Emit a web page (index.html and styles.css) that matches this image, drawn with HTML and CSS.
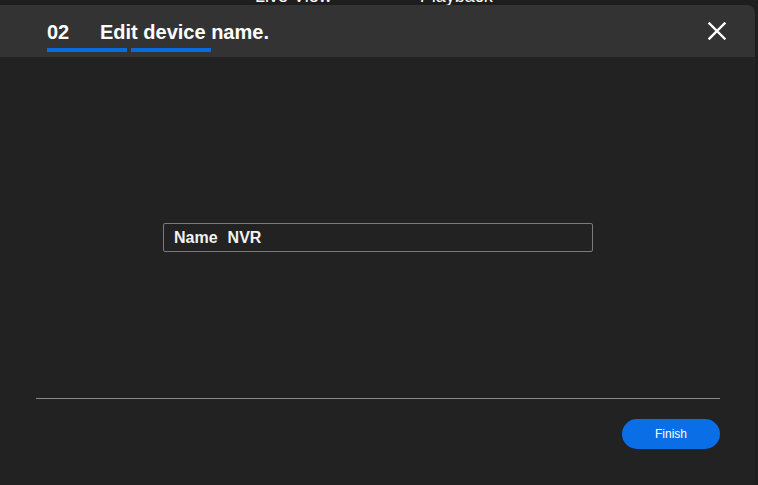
FILE: index.html
```html
<!DOCTYPE html>
<html>
<head>
<meta charset="utf-8">
<link rel="stylesheet" href="styles.css">
</head>
<body>
<div class="topnav">
  <span class="nav-item live">Live View</span>
  <span class="nav-item">Playback</span>
</div>
<div class="modal">
  <div class="modal-header">
    <div class="steps">
      <div class="step step-num">02</div>
      <div class="step step-title">Edit device name.</div>
    </div>
    <button class="close" aria-label="Close">
      <svg width="18" height="18" viewBox="0 0 18 18"><path d="M1.5 1.5 L16.5 16.5 M16.5 1.5 L1.5 16.5" stroke="#fff" stroke-width="2.4" stroke-linecap="square"/></svg>
    </button>
  </div>
  <div class="modal-body">
    <div class="field">
      <span class="label">Name</span>
      <span class="value">NVR</span>
    </div>
  </div>
  <div class="modal-footer">
    <button class="finish">Finish</button>
  </div>
</div>
</body>
</html>
```
FILE: styles.css
```css
html, body {
  margin: 0;
  padding: 0;
}
body {
  width: 758px;
  height: 485px;
  overflow: hidden;
  background: #1e1e1e;
  font-family: "Liberation Sans", Arial, sans-serif;
  position: relative;
}
.topnav {
  height: 5px;
  display: flex;
  padding-left: 255px;
  gap: 88px;
}
.nav-item {
  color: #fff;
  font-size: 18px;
  line-height: 18px;
  margin-top: -13px;
}
.modal {
  position: absolute;
  left: -4px;
  top: 5px;
  width: 759px;
  height: 484px;
  background: #222222;
  border-radius: 0 8px 8px 0;
  overflow: hidden;
  display: flex;
  flex-direction: column;
}
.modal-header {
  height: 52px;
  background: #333333;
  display: flex;
  align-items: flex-start;
  justify-content: space-between;
  padding-left: 51px;
  padding-right: 29px;
}
.steps {
  display: flex;
  gap: 4px;
}
.step {
  width: 80px;
  height: 47px;
  border-bottom: 4px solid #0a6ae0;
  color: #fff;
  font-weight: bold;
  font-size: 20px;
  line-height: 20px;
  padding-top: 17px;
  box-sizing: border-box;
  white-space: nowrap;
}
.step-num + .step-title {
  text-indent: -31px;
}
.close {
  background: none;
  border: 0;
  padding: 0;
  margin-top: 17px;
  width: 18px;
  height: 18px;
  display: block;
}
.close svg { display: block; }
.modal-body {
  height: 342px;
  display: flex;
  align-items: center;
  justify-content: center;
  border-bottom: 1px solid #8a8a8a;
  margin: 0 35px 0 40px;
  padding-top: 20px;
  box-sizing: border-box;
}
.field {
  width: 430px;
  height: 29px;
  box-sizing: border-box;
  border: 1px solid #7b7b7b;
  border-radius: 2px;
  display: flex;
  align-items: center;
  padding-left: 10px;
  gap: 10px;
  color: #f2f2f2;
  font-weight: bold;
  font-size: 16px;
}
.modal-footer {
  display: flex;
  justify-content: flex-end;
  padding: 20px 35px 0 0;
}
.finish {
  width: 98px;
  height: 30px;
  border: 0;
  border-radius: 15px;
  background: #0a6ee6;
  color: #fff;
  font-family: "Liberation Sans", Arial, sans-serif;
  font-size: 12px;
  padding: 0;
}
```
